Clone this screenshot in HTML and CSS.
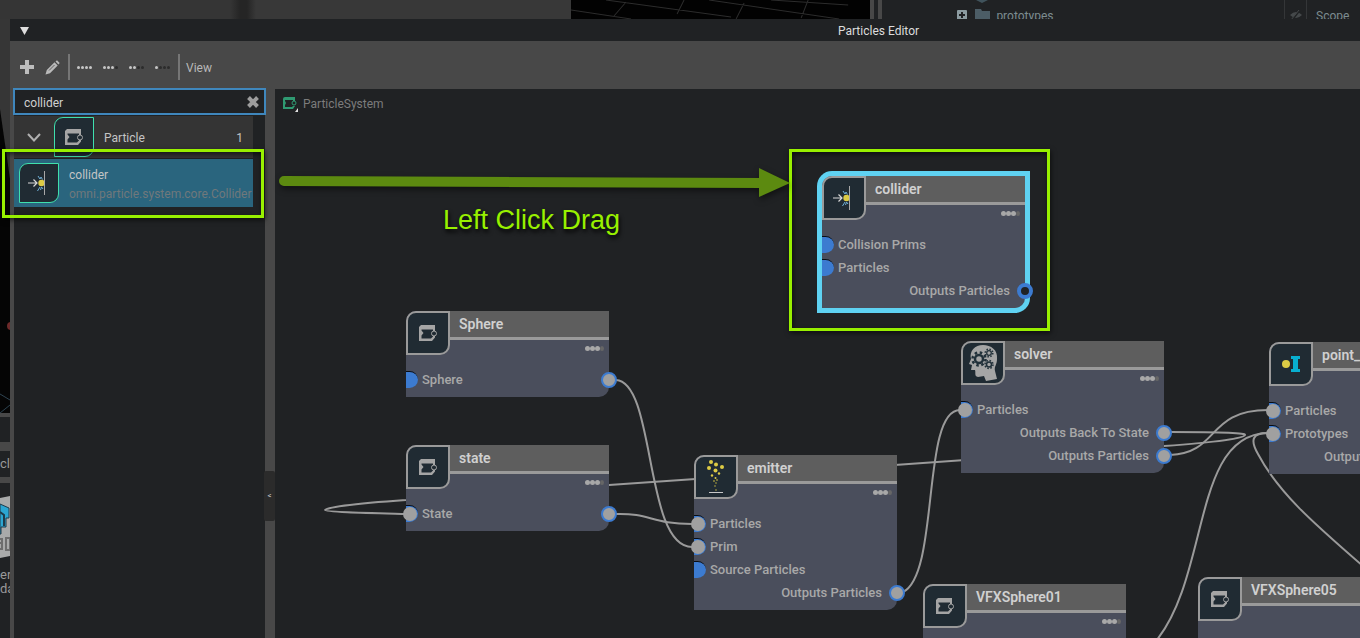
FILE: index.html
```html
<!DOCTYPE html>
<html lang="en">
<head>
<meta charset="utf-8">
<title>Particles Editor</title>
<link rel="stylesheet" href="styles.css">
</head>
<body>
<svg class="defs" aria-hidden="true">
  <symbol id="node-icon" viewBox="0 0 18 16">
    <path d="M2 0H16V6H14V4.500H2.500V5.500L4.500 8L2.500 10.500V13.500H12L14 11.500V11H16V12.500L13 16H0V2Z" fill="currentColor"/>
    <circle cx="15" cy="8.500" r="2.500" fill="#202b33" stroke="currentColor"/>
  </symbol>
  <symbol id="collider-icon" viewBox="0 0 24 26">
    <path d="M1 13H9.500M6.500 9.500L10 13L6.500 16.500" fill="none" stroke="#d8d8d8" stroke-width="1.200"/>
    <path d="M11 6L13 9L14 7L15.500 9.500M10.500 21L13 17M13.500 20L14.500 17L16 19" fill="none" stroke="#6fb0d8"/>
    <circle cx="14.500" cy="13" r="3.200" fill="#dccb45"/>
    <path d="M17.500 1V25" stroke="#a8a8a8"/>
  </symbol>
</svg>
<div class="desktop">
  <div class="backdrop-top">
    <div class="stage-left"></div>
    <div class="viewport">
      <svg class="viewport-grid" viewBox="0 0 299 19" preserveAspectRatio="none"><path d="M35 0L160 17M0 10L60 19M55 2L43 16M113 0L106 14M138 0L268 19M173 3L165 19M200 0L277 5M237 0L230 18" stroke="#2c2c2c" fill="none"/></svg>
    </div>
    <div class="bar"></div>
    <div class="stage-tree">
      <span class="tree-name">
        <svg width="10" height="10" viewBox="0 0 10 10"><rect width="10" height="10" rx="1" fill="#8b9ba0"/><path d="M5 2V8M2 5H8" stroke="#202224" stroke-width="2"/></svg>
        <svg width="17" height="19" viewBox="0 0 17 19"><path d="M2 0H14L8 3Z" fill="#40535c"/><path d="M1 9H7L8 11H16V19H1Z" fill="#4c5d66"/></svg>
        <span>prototypes</span>
      </span>
      <span class="tree-eye"><svg width="14" height="12" viewBox="0 0 14 12"><path d="M1 6Q7 0 13 6Q7 12 1 6Z" fill="#45494b"/><path d="M3 11L11 1" stroke="#202224" stroke-width="2"/><path d="M2 11L10 1" stroke="#45494b"/></svg></span>
      <span class="tree-type">Scope</span>
    </div>
  </div>
  <div class="backdrop-left">
    <div class="left-view"><svg width="10" height="394" viewBox="0 0 10 394"><path d="M0 0H10V160L0 90Z" fill="#363636"/><path d="M0 394L10 386M0 375L10 381" stroke="#2d4350" fill="none"/><circle cx="11" cy="307" r="4" fill="#6d2a2a"/></svg></div>
    <div class="left-band"></div>
    <div class="left-tab">cle</div>
    <div class="left-files">
      <svg width="10" height="62" viewBox="0 0 10 62"><path d="M0 2L10 0V60L0 62Z" fill="#a9aaaa"/><path d="M0 8L9 12V22H6V31H1V38H0Z" fill="#2ca6d2" stroke="#1f3b4a"/><path d="M0 16L4 19V30" fill="none" stroke="#1f3b4a" stroke-width="2"/><path d="M0 43H2V47H0M0 53H2V48M6 42V54H10V42Z" fill="none" stroke="#6e6e6e" stroke-width="2"/></svg>
      <span>ere</span><span>da</span>
    </div>
  </div>
  <main class="window">
    <header class="titlebar">
      <svg class="collapse" width="9" height="8" viewBox="0 0 9 8"><path d="M0 0H9L4.500 8Z" fill="#dedede"/></svg>
      <h1>Particles Editor</h1>
    </header>
    <nav class="toolbar">
      <button class="tool plus" aria-label="Add"><svg width="14" height="14" viewBox="0 0 14 14"><path d="M5 0H9V5H14V9H9V14H5V9H0V5H5Z" fill="#bdbdbd"/></svg></button>
      <button class="tool pencil" aria-label="Edit"><svg width="15" height="15" viewBox="0 0 15 15"><path d="M10.500 1.500L12 0.300L14.700 3L13.500 4.500ZM9.500 2.300L12.700 5.500L5 13.200L0.500 14.500L1.800 10Z" fill="#bababa"/><path d="M4 10.500L9.500 5" stroke="#555" stroke-width="0.900"/></svg></button>
      <span class="divider"></span>
      <button class="dots first" aria-label="Detail 4"><i></i><i></i><i></i><i></i></button>
      <button class="dots" aria-label="Detail 3"><i></i><i></i><i></i><i class="off"></i></button>
      <button class="dots" aria-label="Detail 2"><i></i><i></i><i class="off"></i><i class="off"></i></button>
      <button class="dots last" aria-label="Detail 1"><i></i><i class="off"></i><i class="off"></i><i class="off"></i></button>
      <span class="divider"></span>
      <button class="view">View</button>
    </nav>
    <div class="workspace">
      <aside class="sidebar">
        <div class="search">
          <input type="text" value="collider" aria-label="Search nodes">
          <button aria-label="Clear"><svg width="12" height="12" viewBox="0 0 12 12"><path d="M1.500 1.500L10.500 10.500M10.500 1.500L1.500 10.500" stroke="#9d9d9d" stroke-width="4"/></svg></button>
        </div>
        <div class="group">
          <svg class="chevron" width="14" height="9" viewBox="0 0 14 9"><path d="M1 1L7 7.500L13 1" fill="none" stroke="#b0b0b0" stroke-width="2"/></svg>
          <span class="tile"><svg class="gray" width="18" height="16"><use href="#node-icon"/></svg></span>
          <span class="group-name">Particle</span>
          <span class="group-count">1</span>
        </div>
        <div class="entry">
          <span class="tile"><svg width="24" height="26"><use href="#collider-icon"/></svg></span>
          <span class="entry-text"><span>collider</span><span class="path">omni.particle.system.core.Collider</span></span>
        </div>
      </aside>
      <div class="splitter"><button aria-label="Collapse panel">&lt;</button></div>
      <section class="canvas">
        <div class="crumb"><svg width="15" height="16" viewBox="0 0 15 16"><path d="M0 3Q0 1 2 1H12V5H10V4H2V5L3 7L2 9V11H9L10 10H12L10 13H0Z" fill="#2f9a72"/><circle cx="11" cy="7" r="2" fill="#202224" stroke="#2f9a72"/><path d="M15 12V16H12Z" fill="#e0e0e0"/></svg><span>ParticleSystem</span></div>
        <svg class="wires" width="1085" height="549" viewBox="275 89 1085 549">
          <path d="M616 380C656 382 644 547 692 547"/>
          <path d="M616 514C650 513 652 524 692 524"/>
          <path d="M1170 432C1225 432 1246 433 1245 435C1244 438 1220 442 1164 446C1080 453 740 475 609 485C540 489 460 495 406 500C348 504 325 508 325 510C325 512 370 513 406 514"/>
          <path d="M903 592C940 574 921 410 960 410"/>
          <path d="M1170 455C1220 453 1206 410 1268 410"/>
          <path d="M1156 641C1210 575 1192 434 1268 433"/>
          <path d="M1268 433C1252 433 1250 440 1258 454C1278 492 1312 522 1364 567"/>
        </svg>

        <article class="node sphere">
          <header><span class="node-icon"><svg width="18" height="16"><use href="#node-icon"/></svg></span><div class="node-head"><h2>Sphere</h2><span class="dots"><i></i><i></i><i></i><i class="off"></i></span></div></header>
          <div class="port"><b class="in"></b><span class="grow">Sphere</span><b class="out"></b></div>
        </article>
        <article class="node state">
          <header><span class="node-icon"><svg width="18" height="16"><use href="#node-icon"/></svg></span><div class="node-head"><h2>state</h2><span class="dots"><i></i><i></i><i></i><i class="off"></i></span></div></header>
          <div class="port"><b class="in linked"></b><span class="grow">State</span><b class="out"></b></div>
        </article>
        <article class="node emitter">
          <header><span class="node-icon"><svg width="40" height="40" viewBox="0 0 40 40"><g fill="#dccb45"><circle cx="15" cy="5" r="2"/><circle cx="20" cy="7.500" r="2"/><circle cx="26" cy="10" r="2"/><circle cx="13" cy="11" r="2"/><circle cx="19.500" cy="13.500" r="2"/><circle cx="16" cy="18.500" r="1.200"/><circle cx="23" cy="16.500" r="1.200"/><circle cx="19.500" cy="21" r="1"/><circle cx="18" cy="24" r=".8"/><circle cx="21" cy="23" r=".8"/><circle cx="20" cy="26" r=".7"/><circle cx="19" cy="29" r=".7"/><circle cx="20" cy="33" r=".7"/></g><path d="M13 35.500H27" stroke="#c8c8c8" stroke-width="1"/></svg></span><div class="node-head"><h2>emitter</h2><span class="dots"><i></i><i></i><i></i><i class="off"></i></span></div></header>
          <div class="port"><b class="in linked"></b><span>Particles</span></div>
          <div class="port"><b class="in linked"></b><span>Prim</span></div>
          <div class="port"><b class="in"></b><span>Source Particles</span></div>
          <div class="port end"><span>Outputs Particles</span><b class="out"></b></div>
        </article>
        <article class="node solver">
          <header><span class="node-icon"><svg width="40" height="40" viewBox="0 0 40 40"><path d="M20 2C28 2 35 7 34 16C34 22 31 23 32 28L34 36L23 38L21 33L15 34C11 33 13 30 12 27L8 27L9 22L6 21L8 16C6 8 12 2 20 2Z" fill="#a5a5a5"/><g fill="none" stroke="#22313a"><circle cx="16" cy="16" r="4" stroke-width="2.500"/><circle cx="16" cy="16" r="6.500" stroke-width="2.500" stroke-dasharray="2.500 2.600"/><circle cx="26" cy="10" r="2.300" stroke-width="1.300"/><circle cx="26" cy="10" r="3.800" stroke-width="1.500" stroke-dasharray="1.500 1.480"/><circle cx="26" cy="21.500" r="2.500" stroke-width="1.500"/><circle cx="26" cy="21.500" r="4" stroke-width="1.500" stroke-dasharray="1.600 1.540"/></g></svg></span><div class="node-head"><h2>solver</h2><span class="dots"><i></i><i></i><i></i><i class="off"></i></span></div></header>
          <div class="port"><b class="in linked"></b><span>Particles</span></div>
          <div class="port end"><span>Outputs Back To State</span><b class="out"></b></div>
          <div class="port end"><span>Outputs Particles</span><b class="out"></b></div>
        </article>
        <article class="node point">
          <header><span class="node-icon"><svg width="40" height="40" viewBox="0 0 40 40"><circle cx="15" cy="20" r="4" fill="#dccb45"/><path d="M20 12H29V15H27V25H29V28H20V25H22V15H20Z" fill="#08afd0"/></svg></span><div class="node-head"><h2>point_instancer</h2><span class="dots"><i></i><i></i><i></i><i class="off"></i></span></div></header>
          <div class="port"><b class="in linked"></b><span>Particles</span></div>
          <div class="port"><b class="in linked"></b><span>Prototypes</span></div>
          <div class="port end"><span>Outputs Point Instance</span><b class="out"></b></div>
        </article>
        <article class="node vfx1">
          <header><span class="node-icon"><svg width="18" height="16"><use href="#node-icon"/></svg></span><div class="node-head"><h2>VFXSphere01</h2><span class="dots"><i></i><i></i><i></i><i class="off"></i></span></div></header>
          <div class="port"></div>
        </article>
        <article class="node vfx5">
          <header><span class="node-icon"><svg width="18" height="16"><use href="#node-icon"/></svg></span><div class="node-head"><h2>VFXSphere05</h2><span class="dots"><i></i><i></i><i></i><i class="off"></i></span></div></header>
          <div class="port"></div>
        </article>
        <article class="node collider selected">
          <header><span class="node-icon"><svg width="24" height="26"><use href="#collider-icon"/></svg></span><div class="node-head"><h2>collider</h2><span class="dots"><i></i><i></i><i></i><i class="off"></i></span></div></header>
          <div class="port"><b class="in"></b><span>Collision Prims</span></div>
          <div class="port"><b class="in"></b><span>Particles</span></div>
          <div class="port end"><span>Outputs Particles</span><b class="out open"></b></div>
        </article>
      </section>
    </div>
  </main>
  <div class="callout from"></div>
  <div class="callout to"></div>
  <svg class="arrow" width="512" height="32" viewBox="0 0 512 32"><path d="M5 14L484 16" stroke="#5c8a10" stroke-width="10" stroke-linecap="round"/><path d="M480 1L511 16L480 30Z" fill="#5c8a10"/></svg>
  <p class="hint">Left Click Drag</p>
</div>
</body>
</html>
```

FILE: styles.css
```css
* { box-sizing: border-box; }
body { margin: 0; background: #202224; font: 12px/16px Roboto, "Open Sans", sans-serif; color: #c4c4c4; overflow: hidden; }
h1, h2, p { margin: 0; font-size: inherit; font-weight: 500; }
button { padding: 0; border: 0; background: none; color: inherit; font: inherit; display: flex; align-items: center; }
svg { display: block; flex: none; }
.defs { position: absolute; width: 0; height: 0; }

.desktop { position: relative; height: 100vh; display: grid; grid-template-columns: 10px minmax(0, 1fr); grid-template-rows: 19px minmax(0, 1fr); overflow: hidden; }

/* Panels behind the editor window */
.backdrop-top { grid-column: 1 / 3; display: flex; overflow: hidden; background: #202224; color: #7c8c90; }
.stage-left { flex: 0 0 42%; background: linear-gradient(90deg, #353535 0 230px, #252525 240px 247px, #383838 256px); }
.viewport { flex: 0 0 22%; background: #020202; }
.viewport-grid { width: 100%; height: 100%; }
.bar { flex: 0 0 12px; border: solid #484848; border-width: 0 4px; }
.stage-tree { flex: 1; display: flex; align-items: flex-start; min-width: 0; }
.tree-name { flex: 1; display: flex; align-items: flex-start; gap: 5px; padding-left: 75px; }
.tree-name svg:first-child { margin-top: 10px; }
.tree-name svg:nth-child(2) { margin-left: 2px; }
.tree-name span { padding-top: 8px; }
.tree-eye { align-self: stretch; width: 23px; padding: 9px 4px 0; border: solid #343638; border-width: 0 1px; }
.tree-type { width: 53px; padding: 8px 0 0 9px; }
.backdrop-left { overflow: hidden; background: #202224; color: #999; font-size: 13px; white-space: nowrap; display: flex; flex-direction: column; }
.left-view { flex: none; height: 394px; overflow: hidden; background: #050505; }
.left-band { flex: none; height: 38px; border: solid #484848; border-width: 4px 0 9px; }
.left-tab { flex: none; height: 32px; padding-top: 5px; border-bottom: 6px solid #484848; }
.left-files { padding-top: 13px; line-height: 14px; }
.left-files svg { margin-bottom: 10px; }
.left-files span { display: block; }

/* Editor window */
.window { min-width: 0; display: flex; flex-direction: column; background: #484848; }
.titlebar { flex: none; height: 22px; display: flex; align-items: center; padding: 1px 10px 0; background: #202224; color: #dcdcdc; }
.titlebar h1 { flex: 1; padding-left: 378px; text-align: center; font-weight: 400; }
.toolbar { flex: none; height: 47px; display: flex; align-items: center; padding: 5px 10px 0; color: #b8b8b8; }
.tool { margin-right: 11px; }
.pencil { margin-right: 8px; }
.divider { width: 2px; height: 26px; background: #767676; }
.dots { display: flex; gap: 1px; }
.dots i { width: 3px; height: 3px; border-radius: 50%; background: #c6c6c6; }
.toolbar .dots { margin-left: 11px; }
.toolbar .first { margin-left: 7px; }
.toolbar .last { margin-right: 8px; }
.toolbar .dots i.off { background: #2c2c2c; }
.view { margin-left: 6px; padding-top: 2px; }
.workspace { flex: 1; min-height: 0; display: flex; padding-left: 3px; }
.sidebar { flex: 0 0 253px; min-width: 0; padding: 0 1px; background: linear-gradient(90deg, #484848 1px, #202224 1px calc(100% - 1px), #484848 0); }
.search { display: flex; align-items: center; height: 27px; margin: 0 -1px 1px; padding: 2px 5px 0 9px; border: 2px solid #3f87bd; background: #202224; }
.search input { flex: 1; min-width: 0; padding: 0; border: 0; outline: 0; background: none; color: #d0d0d0; font: inherit; }
.search button { padding-bottom: 2px; }
.group { display: flex; align-items: center; height: 42px; margin-right: 12px; padding: 0 10px 0 13px; background: #343434; }
.group-name { flex: 1; padding-left: 10px; }
.group-name, .group-count { padding-top: 2px; }
.chevron { margin-right: 13px; }
.tile { flex: none; width: 40px; height: 40px; display: grid; place-items: center; border: 1px solid #3fe0ae; border-radius: 9px 0; background: #202b33; }
.gray, .node-icon { color: #a5a5a5; }
.entry { display: flex; align-items: center; gap: 10px; height: 48px; margin: 1px 12px 0 0; padding-left: 5px; background: #2a657e; white-space: nowrap; }
.entry-text { display: flex; flex-direction: column; gap: 3px; padding-top: 2px; }
.path { color: #70787b; }
.splitter { flex: 0 0 9px; padding-top: 383px; }
.splitter button { justify-content: center; width: 11px; height: 50px; margin-left: -2px; border-radius: 2px; background: #2b2b2b; color: #ccc; font-size: 8px; }

/* Node graph */
.canvas { position: relative; flex: 1; min-width: 0; margin-top: 1px; overflow: hidden; background: #202224; color: #7c7c7c; }
.crumb { display: flex; align-items: center; gap: 5px; padding: 7px 8px; }
.wires { position: absolute; left: 0; top: 0; fill: none; stroke: #9a9a9a; stroke-width: 2; }
.node { position: absolute; width: 203px; padding-bottom: 6px; border-radius: 10px 0; background: #4a4e5c; color: #a8a8a8; font-size: 13px; font-weight: 500; white-space: nowrap; }
.node > header { display: flex; height: 45px; margin-bottom: 12px; }
.node-icon { flex: none; width: 44px; height: 44px; display: grid; place-items: center; border: 2px solid #9a9a9a; border-radius: 10px 0; background: #202b33; }
.node-head { flex: 1; display: flex; flex-direction: column; align-items: flex-end; min-width: 0; }
.node h2 { width: 100%; height: 29px; padding: 5px 9px 0; border-bottom: 3px solid #9a9a9a; background: #5e5e5e; color: #d0d0d0; font-size: 14px; font-weight: 600; }
.node .dots { height: 5px; gap: 0; margin: 6px 5px 0 0; }
.node .dots i { width: 5px; height: 5px; background: #a8a8a8; }
.node .dots i.off { width: 4px; background: #666; }
.port { display: flex; align-items: center; height: 23px; }
.end { justify-content: flex-end; }
.grow { flex: 1; }
.in { position: relative; width: 12px; height: 17px; margin-right: 4px; border-top: 1px solid #090d14; border-radius: 0 9px 9px 0; background: #3c7bd0; }
.linked::after { content: ""; position: absolute; left: -3px; top: 1px; width: 14px; height: 14px; border-radius: 50%; background: #a0a0a0; }
.out { width: 16px; height: 16px; margin: 0 -8px 0 7px; border: 2px solid #3c7bd0; border-radius: 50%; background: #a0a0a0; }
.open { border-width: 4px; background: #202224; }
.selected { box-shadow: 0 0 0 5px #5fd2f2; }
.sphere { left: 131px; top: 222px; }
.state { left: 131px; top: 356px; }
.emitter { left: 419px; top: 366px; }
.solver { left: 686px; top: 252px; }
.point { left: 994px; top: 253px; }
.vfx1 { left: 648px; top: 495px; }
.vfx5 { left: 923px; top: 488px; }
.collider { left: 547px; top: 87px; }

/* Tutorial annotations over the window */
.callout { position: absolute; border: 3px solid #98f000; box-shadow: 1px 2px 5px rgba(0, 0, 0, .6), inset 1px 2px 5px rgba(0, 0, 0, .6); }
.from { left: 2px; top: 149px; width: 262px; height: 69px; }
.to { left: 789px; top: 149px; width: 261px; height: 182px; }
.arrow { position: absolute; left: 279px; top: 167px; filter: drop-shadow(1px 3px 3px rgba(0, 0, 0, .5)); }
.hint { position: absolute; left: 443px; top: 205px; color: #98f000; font: 27px/30px "Liberation Sans", Arial, sans-serif; text-shadow: 1px 3px 4px #000; }
```
